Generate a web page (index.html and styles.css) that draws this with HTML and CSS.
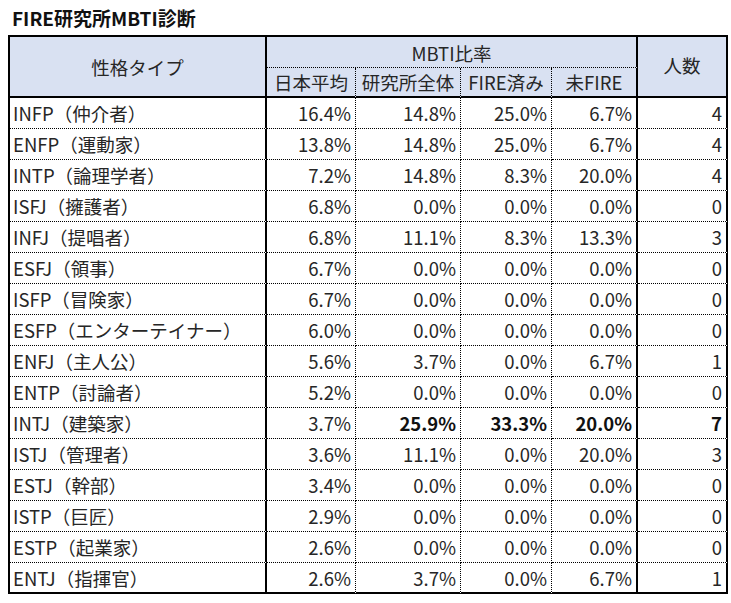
FILE: index.html
```html
<!DOCTYPE html>
<html lang="ja">
<head>
<meta charset="utf-8">
<title>FIRE研究所MBTI診断</title>
<link rel="stylesheet" href="styles.css">
</head>
<body>
<div class="page">
  <h1 class="title">FIRE研究所MBTI診断</h1>
  <table class="mbti">
    <colgroup>
      <col class="c-type"><col class="c-jp"><col class="c-all"><col class="c-fire"><col class="c-notfire"><col class="c-num">
    </colgroup>
    <thead>
      <tr class="h1">
        <th rowspan="2" class="th-type">性格タイプ</th>
        <th colspan="4" class="th-ratio">MBTI比率</th>
        <th rowspan="2" class="th-num">人数</th>
      </tr>
      <tr class="h2">
        <th class="sub">日本平均</th>
        <th class="sub">研究所全体</th>
        <th class="sub">FIRE済み</th>
        <th class="sub sub-last">未FIRE</th>
      </tr>
    </thead>
    <tbody>
      <tr><td class="type">INFP（仲介者）</td><td>16.4%</td><td>14.8%</td><td>25.0%</td><td class="last">6.7%</td><td class="num">4</td></tr>
      <tr><td class="type">ENFP（運動家）</td><td>13.8%</td><td>14.8%</td><td>25.0%</td><td class="last">6.7%</td><td class="num">4</td></tr>
      <tr><td class="type">INTP（論理学者）</td><td>7.2%</td><td>14.8%</td><td>8.3%</td><td class="last">20.0%</td><td class="num">4</td></tr>
      <tr><td class="type">ISFJ（擁護者）</td><td>6.8%</td><td>0.0%</td><td>0.0%</td><td class="last">0.0%</td><td class="num">0</td></tr>
      <tr><td class="type">INFJ（提唱者）</td><td>6.8%</td><td>11.1%</td><td>8.3%</td><td class="last">13.3%</td><td class="num">3</td></tr>
      <tr><td class="type">ESFJ（領事）</td><td>6.7%</td><td>0.0%</td><td>0.0%</td><td class="last">0.0%</td><td class="num">0</td></tr>
      <tr><td class="type">ISFP（冒険家）</td><td>6.7%</td><td>0.0%</td><td>0.0%</td><td class="last">0.0%</td><td class="num">0</td></tr>
      <tr><td class="type">ESFP（エンターテイナー）</td><td>6.0%</td><td>0.0%</td><td>0.0%</td><td class="last">0.0%</td><td class="num">0</td></tr>
      <tr><td class="type">ENFJ（主人公）</td><td>5.6%</td><td>3.7%</td><td>0.0%</td><td class="last">6.7%</td><td class="num">1</td></tr>
      <tr><td class="type">ENTP（討論者）</td><td>5.2%</td><td>0.0%</td><td>0.0%</td><td class="last">0.0%</td><td class="num">0</td></tr>
      <tr><td class="type">INTJ（建築家）</td><td>3.7%</td><td class="bold">25.9%</td><td class="bold">33.3%</td><td class="last bold">20.0%</td><td class="num bold">7</td></tr>
      <tr><td class="type">ISTJ（管理者）</td><td>3.6%</td><td>11.1%</td><td>0.0%</td><td class="last">20.0%</td><td class="num">3</td></tr>
      <tr><td class="type">ESTJ（幹部）</td><td>3.4%</td><td>0.0%</td><td>0.0%</td><td class="last">0.0%</td><td class="num">0</td></tr>
      <tr><td class="type">ISTP（巨匠）</td><td>2.9%</td><td>0.0%</td><td>0.0%</td><td class="last">0.0%</td><td class="num">0</td></tr>
      <tr><td class="type">ESTP（起業家）</td><td>2.6%</td><td>0.0%</td><td>0.0%</td><td class="last">0.0%</td><td class="num">0</td></tr>
      <tr><td class="type">ENTJ（指揮官）</td><td>2.6%</td><td>3.7%</td><td>0.0%</td><td class="last">6.7%</td><td class="num">1</td></tr>
    </tbody>
  </table>
</div>
</body>
</html>
```
FILE: styles.css
```css
* { box-sizing: border-box; }
html, body {
  margin: 0;
  padding: 0;
  background: #ffffff;
}
.page {
  padding: 0 0 0 8px;
  font-family: "Noto Sans CJK JP", "Noto Sans", sans-serif;
  color: #262626;
}
.title {
  margin: 0;
  padding: 5px 0 0 4px;
  height: 35px;
  font-size: 19px;
  line-height: 25px;
  font-weight: 700;
  color: #111;
}
.mbti {
  border-collapse: separate;
  border-spacing: 0;
  table-layout: fixed;
  width: 720px;
  border-top: 2px solid #000;
  border-left: 2px solid #000;
  font-size: 18.5px;
}
.c-type { width: 257px; }
.c-jp { width: 89px; }
.c-all { width: 105px; }
.c-fire { width: 91px; }
.c-notfire { width: 86px; }
.c-num { width: 90px; }

.mbti th,
.mbti td {
  padding: 0;
  line-height: 20px;
  border-right: 1px dotted #000;
  border-bottom: 1px dotted #000;
  white-space: nowrap;
}
.mbti th {
  background: #d9e1f2;
  font-weight: 400;
  text-align: center;
}
.mbti .h1 { height: 31px; }
.mbti .h2 { height: 30px; }
.mbti .th-type {
  border-right: 2px solid #000;
  border-bottom: 2px solid #000;
}
.mbti .th-ratio {
  border-right: 2px solid #000;
  padding-top: 2px;
}
.mbti .th-num {
  border-right: 2px solid #000;
  border-bottom: 2px solid #000;
  padding-bottom: 4px;
}
.mbti .sub {
  border-bottom: 2px solid #000;
}
.mbti .sub-last {
  border-right: 2px solid #000;
}
.mbti tbody tr { height: 31px; }
.mbti td {
  padding: 0 4px;
  text-align: right;
}
.mbti td.type {
  text-align: left;
  padding-left: 3px;
  border-right: 2px solid #000;
}
.mbti td.last,
.mbti td.num {
  border-right: 2px solid #000;
}
.mbti tbody tr:last-child td { border-bottom: 2px solid #000; }
.mbti .bold {
  font-weight: 700;
  color: #111;
}
```
